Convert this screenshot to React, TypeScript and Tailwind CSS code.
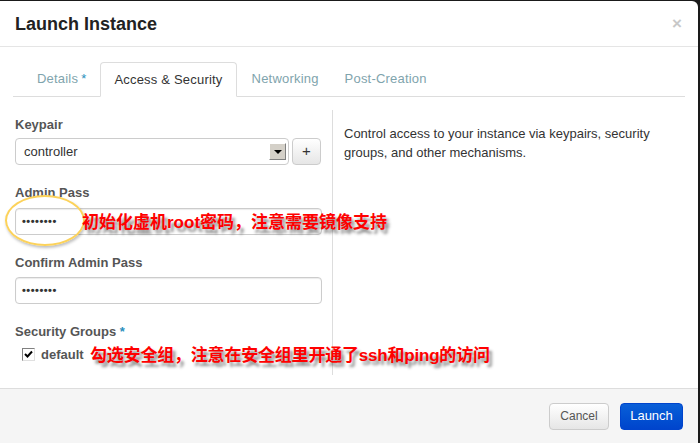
import React from "react";

const font = { fontFamily: '"Liberation Sans", Arial, sans-serif' };
const cjk = { fontFamily: '"Liberation Sans", "Noto Sans CJK SC", sans-serif' };

function Dots() {
  return <span className="tracking-[0.5px] text-[#333] text-[11px] font-bold">••••••••</span>;
}

export default function App() {
  return (
    <div className="w-[700px] h-[443px] bg-[#1a1a1a] pt-px pr-[2px] overflow-hidden" style={font}>
      <div className="relative bg-white h-[442px] rounded-tr-[6px] flex flex-col">
        {/* Header */}
        <div className="h-[46px] border-b border-[#e5e5e5] flex items-center justify-between pl-[15px] pr-[16px] shrink-0">
          <h3 className="text-[18px] font-bold text-[#222] leading-none">Launch Instance</h3>
          <span className="text-[#c8c8c8] text-[17px] font-bold leading-none">×</span>
        </div>

        {/* Body */}
        <div className="flex-1 pt-[15px] px-[13px]">
          <div className="flex border-b border-[#ddd] h-[35px] items-end pl-[10px] text-[13px] tracking-[0.2px]">
            <div className="px-[14px] h-[34px] flex items-center text-[#7fa4ad]">
              Details <span className="text-[#2a8fbd] ml-[3px]">*</span>
            </div>
            <div className="px-[13px] h-[35px] flex items-center text-[#333] border border-[#ddd] border-b-white rounded-t-[4px] bg-white -mb-px">
              Access &amp; Security
            </div>
            <div className="px-[15px] h-[34px] flex items-center text-[#7fa4ad]">Networking</div>
            <div className="px-[11px] h-[34px] flex items-center text-[#7fa4ad]">Post-Creation</div>
          </div>

          <div className="flex mt-[13px]">
            {/* Left column */}
            <div className="w-[320px] pl-[2px] pr-[11px] pt-[7px] h-[265px] border-r border-[#ddd]">
              <div className="text-[13px] font-bold text-[#555] leading-[16px]">Keypair</div>
              <div className="flex gap-[3px] mt-[5px]">
                <div className="w-[274px] h-[27px] border border-[#ccc] rounded-[4px] flex items-center justify-between pl-[8px] pr-[2px] text-[13px] text-[#333]">
                  controller
                  <div className="w-[17px] h-[17px] bg-[#d4d0c8] border border-[#808080] border-t-white border-l-white flex items-center justify-center">
                    <div className="w-0 h-0 border-l-[4px] border-r-[4px] border-t-[4px] border-l-transparent border-r-transparent border-t-black" />
                  </div>
                </div>
                <div className="w-[29px] h-[27px] border border-[#ccc] rounded-[4px] bg-gradient-to-b from-white to-[#e6e6e6] flex items-center justify-center text-[15px] text-[#333]">+</div>
              </div>

              <div className="text-[13px] font-bold text-[#555] leading-[16px] mt-[20px]">Admin Pass</div>
              <div className="w-[307px] h-[27px] border border-[#ccc] rounded-[4px] mt-[7px] flex items-center pl-[6px] shadow-[inset_0_1px_1px_rgba(0,0,0,0.08)]">
                <Dots />
              </div>

              <div className="text-[13px] font-bold text-[#555] leading-[16px] mt-[20px]">Confirm Admin Pass</div>
              <div className="w-[307px] h-[27px] border border-[#ccc] rounded-[4px] mt-[6px] flex items-center pl-[6px] shadow-[inset_0_1px_1px_rgba(0,0,0,0.08)]">
                <Dots />
              </div>

              <div className="text-[13px] font-bold text-[#555] leading-[16px] mt-[20px]">
                Security Groups <span className="text-[#2a8fbd]">*</span>
              </div>
              <div className="flex items-center mt-[5px] pl-[7px]">
                <div className="w-[13px] h-[13px] border border-[#808080] border-b-[#e0e0e0] border-r-[#e0e0e0] bg-white flex items-center justify-center">
                  <svg width="9" height="9" viewBox="0 0 9 9">
                    <path d="M1 4 L3.5 6.5 L8 1.5" stroke="black" strokeWidth="2" fill="none" />
                  </svg>
                </div>
                <span className="ml-[6px] text-[13px] font-bold text-[#555]">default</span>
              </div>
            </div>

            {/* Right column */}
            <div className="pl-[11px] pt-[14px] text-[13px] text-[#333] leading-[19px] w-[340px]">
              Control access to your instance via keypairs, security groups, and other mechanisms.
            </div>
          </div>
        </div>

        {/* Footer */}
        <div className="h-[55px] bg-[#f5f5f5] border-t border-[#ddd] flex items-center justify-end pr-[15px] gap-[11px] shrink-0">
          <div className="w-[60px] h-[27px] border border-[#ccc] rounded-[4px] bg-gradient-to-b from-white to-[#e6e6e6] flex items-center justify-center text-[12px] text-[#555]">Cancel</div>
          <div className="w-[63px] h-[27px] border border-[#0044cc] rounded-[4px] bg-gradient-to-b from-[#0a5fd8] to-[#0044cc] flex items-center justify-center text-[13px] text-white">Launch</div>
        </div>

        {/* Annotations */}
        <div className="absolute left-[5px] top-[194px] w-[80px] h-[51px] rounded-[50%] border-2 border-[#fcd25a] shadow-[1px_2px_3px_rgba(0,0,0,0.25)]" />
        <div className="absolute left-[82px] top-[213px] text-[17px] font-bold text-[#ff0000] leading-none whitespace-nowrap [text-shadow:3px_4px_3px_rgba(0,0,0,0.45)]" style={cjk}>
          初始化虚机root密码，注意需要镜像支持
        </div>
        <div className="absolute left-[90px] top-[346px] text-[17px] font-bold text-[#ff0000] leading-none whitespace-nowrap tracking-[-0.2px] [text-shadow:3px_4px_3px_rgba(0,0,0,0.45)]" style={cjk}>
          勾选安全组，注意在安全组里开通了ssh和ping的访问
        </div>
      </div>
    </div>
  );
}
